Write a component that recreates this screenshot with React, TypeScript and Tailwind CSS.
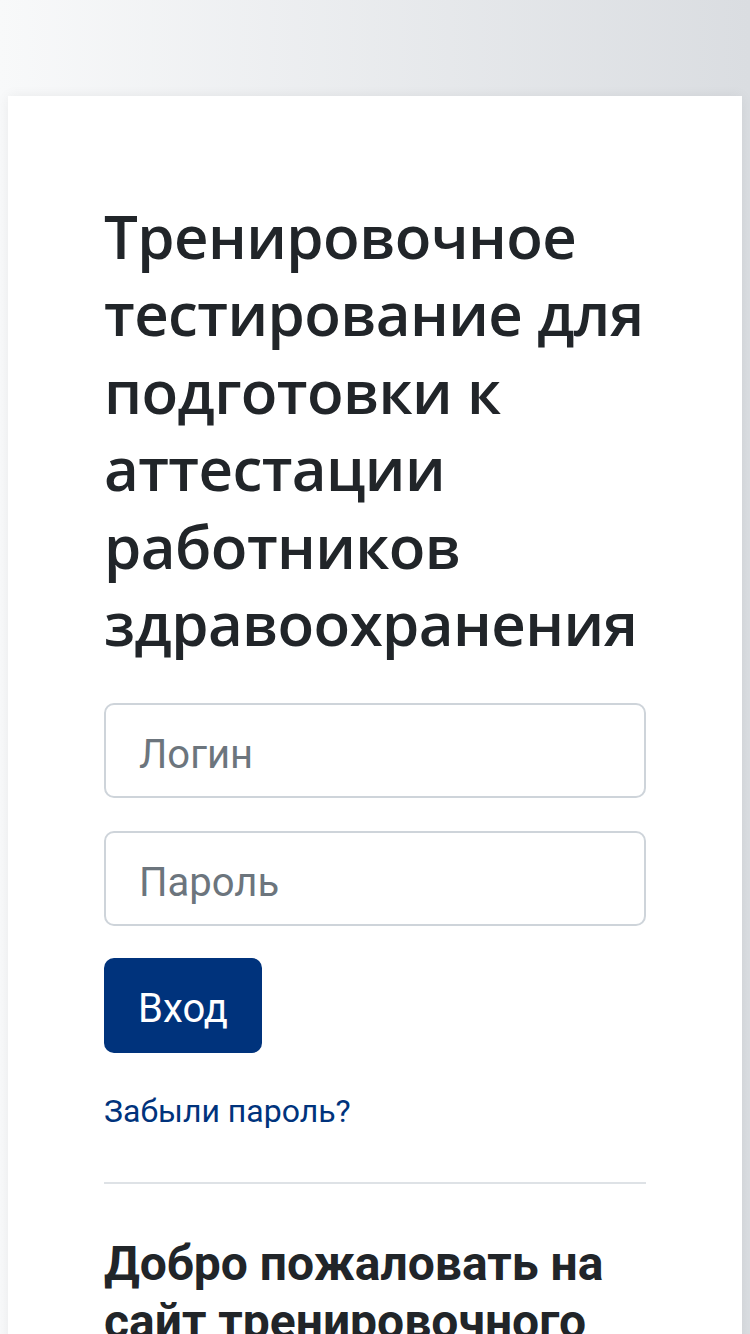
const App = () => {
  return (
    <div className="min-h-screen bg-gradient-to-r from-[#f8f9fa] to-[#dadde1] pt-[96px] px-[8px] font-['Roboto',sans-serif]">
      <div className="bg-white shadow-[0_0_12px_rgba(0,0,0,0.06)] px-[96px] pt-[102px] pb-16 min-h-[1300px]">
        <h1 className="font-['Open_Sans',sans-serif] font-semibold text-[60px] leading-[77.4px] text-[#212529] tracking-[-0.6px]">
          Тренировочное тестирование для подготовки к аттестации работников здравоохранения
        </h1>

        <form className="mt-[41px] flex flex-col">
          <input
            type="text"
            placeholder="Логин"
            className="h-[95px] w-full rounded-[10px] border-2 border-[#ced4da] px-[33px] pt-[8px] text-[40px] text-[#495057] placeholder:text-[#6c757d] outline-none"
          />
          <input
            type="password"
            placeholder="Пароль"
            className="mt-[33px] h-[95px] w-full rounded-[10px] border-2 border-[#ced4da] px-[33px] pt-[8px] text-[40px] text-[#495057] placeholder:text-[#6c757d] outline-none"
          />
          <div className="mt-[32px]">
            <button
              type="button"
              className="h-[95px] px-[34px] pt-[6px] rounded-[10px] bg-[#00337c] text-white text-[40px]"
            >
              Вход
            </button>
          </div>
        </form>

        <a href="#" className="mt-[34px] block text-[32px] leading-[48px] text-[#00337c]">
          Забыли пароль?
        </a>

        <hr className="mt-[47px] border-t-2 border-[#dee2e6]" />

        <h2 className="mt-[51px] font-bold text-[48px] leading-[58px] text-[#212529]">
          Добро пожаловать на сайт тренировочного тестирования
        </h2>
      </div>
    </div>
  );
};

export default App;
